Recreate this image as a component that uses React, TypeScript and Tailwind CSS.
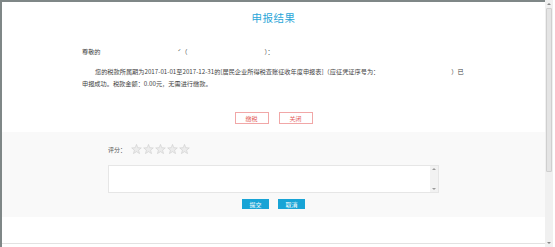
import React from 'react';

const cjk = { fontFamily: '"Noto Sans CJK SC", "Noto Sans", sans-serif' };

function Star() {
  return (
    <svg width="11" height="10" viewBox="0 0 24 23">
      <polygon
        points="12,1 15,8.6 23,9 16.8,14.2 19,22 12,17.6 5,22 7.2,14.2 1,9 9,8.6"
        fill="#ececec"
        stroke="#cdcdcd"
        strokeWidth="1.4"
        strokeLinejoin="round"
      />
    </svg>
  );
}

export default function App() {
  return (
    <div className="flex h-[247px] w-[555px] bg-white text-[#3f3f3f]" style={cjk}>
      <div className="flex flex-1 flex-col border-l-2 border-t-2 border-[#7f8787]">
        {/* title */}
        <div className="mt-[10px] text-center text-[10.5px] leading-[12px] tracking-[0.5px] text-[#2aa6d8]">申报结果</div>

        {/* message */}
        <div className="mt-[22px] pl-[80px] text-[6.2px] leading-[12px]">
          <div className="flex items-center">
            <span>尊敬的</span>
            <span className="inline-block w-[77px]" />
            <span>ˊ（</span>
            <span className="inline-block w-[77px]" />
            <span>）：</span>
          </div>
          <div className="mt-[8px] flex items-center pl-[13px]">
            <span>您的税款所属期为2017-01-01至2017-12-31的[居民企业所得税查账征收年度申报表]（应征凭证序号为：</span>
            <span className="inline-block w-[72px]" />
            <span>）已</span>
          </div>
          <div>申报成功。税款金额：0.00元，无需进行缴款。</div>
        </div>

        <div className="mt-[22px] flex justify-center gap-[10px] text-[6px]">
          <button className="flex h-[12px] w-[34px] items-center justify-center border border-[#f1a7a7] text-[#e35d5d]">缴税</button>
          <button className="flex h-[12px] w-[34px] items-center justify-center border border-[#f1a7a7] text-[#e35d5d]">关闭</button>
        </div>

        {/* rating */}
        <div className="mt-[8px] h-[85px] bg-[#f9f9f9]">
          <div className="mt-[12px] flex items-center pl-[106px]">
            <span className="text-[6px] text-[#555]">评分：</span>
            <div className="ml-[5px] flex gap-[1px]">
              <Star />
              <Star />
              <Star />
              <Star />
              <Star />
            </div>
          </div>
          <div className="mt-[11px] ml-[106px] flex h-[28px] w-[331px] border border-[#e6e6e6] bg-white">
            <div className="flex-1" />
            <div className="flex w-[8px] flex-col items-center justify-between bg-[#f2f2f2] py-[2px]">
              <div className="h-0 w-0 border-x-[2px] border-b-[2px] border-x-transparent border-b-[#999]" />
              <div className="h-0 w-0 border-x-[2px] border-t-[2px] border-x-transparent border-t-[#999]" />
            </div>
          </div>
          <div className="mt-[6px] flex justify-center gap-[9px] text-[6px] text-white">
            <button className="flex h-[10px] w-[27px] items-center justify-center bg-[#18a4d6]">提交</button>
            <button className="flex h-[10px] w-[27px] items-center justify-center bg-[#18a4d6]">取消</button>
          </div>
        </div>

        <div className="flex-1" />
        <div className="mb-[3px] h-[1px] bg-[#e2e2e2]" />
      </div>

      {/* page scrollbar */}
      <div className="flex w-[8px] flex-col items-center bg-[#f0f0f0]">
        <div className="mt-[3px] h-0 w-0 border-x-[2px] border-b-[2px] border-x-transparent border-b-[#888]" />
        <div className="mt-[3px] h-[164px] w-[6px] rounded-[1px] border border-[#cfcfcf] bg-[#e4e4e4]" />
        <div className="flex-1" />
        <div className="mb-[3px] h-0 w-0 border-x-[2px] border-t-[2px] border-x-transparent border-t-[#888]" />
      </div>
      <div className="w-[2px]" />
    </div>
  );
}
